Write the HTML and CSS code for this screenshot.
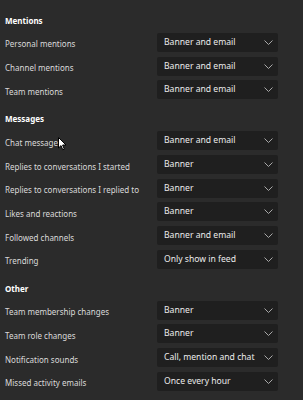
FILE: index.html
```html
<!DOCTYPE html>
<html lang="en">
<head>
    <meta charset="UTF-8">
    <meta name="viewport" content="width=device-width, initial-scale=1.0">
    <title>Notifications</title>
    <link rel="stylesheet" href="styles.css">
</head>
<body>
    <div class="settings">
        <div class="section">
            <h3>Mentions</h3>
            <div class="row"><span class="label">Personal mentions</span><div class="select">Banner and email<svg class="chev" width="9" height="5" viewBox="0 0 9 5"><polyline points="0.5,0.5 4.5,4.5 8.5,0.5"/></svg></div></div>
            <div class="row"><span class="label">Channel mentions</span><div class="select">Banner and email<svg class="chev" width="9" height="5" viewBox="0 0 9 5"><polyline points="0.5,0.5 4.5,4.5 8.5,0.5"/></svg></div></div>
            <div class="row"><span class="label">Team mentions</span><div class="select">Banner and email<svg class="chev" width="9" height="5" viewBox="0 0 9 5"><polyline points="0.5,0.5 4.5,4.5 8.5,0.5"/></svg></div></div>
        </div>

        <div class="section">
            <h3>Messages</h3>
            <div class="row"><span class="label cursor-host">Chat messages<svg class="cursor" width="9" height="14" viewBox="0 0 9 14"><path d="M0.5 0.5 L0.5 11 L3 8.6 L4.8 12.8 L6.3 12.1 L4.6 8 L8 8 Z"/></svg></span><div class="select">Banner and email<svg class="chev" width="9" height="5" viewBox="0 0 9 5"><polyline points="0.5,0.5 4.5,4.5 8.5,0.5"/></svg></div></div>
            <div class="row"><span class="label">Replies to conversations I started</span><div class="select">Banner<svg class="chev" width="9" height="5" viewBox="0 0 9 5"><polyline points="0.5,0.5 4.5,4.5 8.5,0.5"/></svg></div></div>
            <div class="row"><span class="label">Replies to conversations I replied to</span><div class="select">Banner<svg class="chev" width="9" height="5" viewBox="0 0 9 5"><polyline points="0.5,0.5 4.5,4.5 8.5,0.5"/></svg></div></div>
            <div class="row"><span class="label">Likes and reactions</span><div class="select">Banner<svg class="chev" width="9" height="5" viewBox="0 0 9 5"><polyline points="0.5,0.5 4.5,4.5 8.5,0.5"/></svg></div></div>
            <div class="row"><span class="label">Followed channels</span><div class="select">Banner and email<svg class="chev" width="9" height="5" viewBox="0 0 9 5"><polyline points="0.5,0.5 4.5,4.5 8.5,0.5"/></svg></div></div>
            <div class="row"><span class="label">Trending</span><div class="select">Only show in feed<svg class="chev" width="9" height="5" viewBox="0 0 9 5"><polyline points="0.5,0.5 4.5,4.5 8.5,0.5"/></svg></div></div>
        </div>

        <div class="section">
            <h3>Other</h3>
            <div class="row"><span class="label">Team membership changes</span><div class="select">Banner<svg class="chev" width="9" height="5" viewBox="0 0 9 5"><polyline points="0.5,0.5 4.5,4.5 8.5,0.5"/></svg></div></div>
            <div class="row"><span class="label">Team role changes</span><div class="select">Banner<svg class="chev" width="9" height="5" viewBox="0 0 9 5"><polyline points="0.5,0.5 4.5,4.5 8.5,0.5"/></svg></div></div>
            <div class="row"><span class="label">Notification sounds</span><div class="select">Call, mention and chat<svg class="chev" width="9" height="5" viewBox="0 0 9 5"><polyline points="0.5,0.5 4.5,4.5 8.5,0.5"/></svg></div></div>
            <div class="row"><span class="label">Missed activity emails</span><div class="select">Once every hour<svg class="chev" width="9" height="5" viewBox="0 0 9 5"><polyline points="0.5,0.5 4.5,4.5 8.5,0.5"/></svg></div></div>
        </div>
    </div>
</body>
</html>
```

FILE: styles.css
```css
* { margin: 0; padding: 0; box-sizing: border-box; }
html, body { background: #2b2b2b; }
body { font-family: "Noto Sans", "Open Sans", sans-serif; color: #dadada; font-size: 8px; width: 303px; height: 400px; overflow: hidden; }
.settings { padding: 14px 25px 0 5px; display: flex; flex-direction: column; gap: 13px; }
.section { display: flex; flex-direction: column; gap: 4.7px; }
.section h3 { font-size: 8px; font-weight: bold; color: #fff; line-height: 14px; height: 14px; margin-bottom: 0.3px; }
.row { display: flex; align-items: center; height: 19px; }
.label { width: 152px; flex: none; white-space: nowrap; padding-top: 3px; }
.select { width: 121px; flex: none; height: 19px; background: #1f1f1f; border-radius: 2px; display: flex; align-items: center; justify-content: space-between; padding: 0 5px 1px 7px; color: #ececec; font-size: 8.6px; white-space: nowrap; }
.chev { margin-top: 1px; }
.chev polyline { fill: none; stroke: #a8a8a8; stroke-width: 1; }
.cursor-host { position: relative; }
.cursor { position: absolute; left: 53px; top: 3px; }
.cursor path { fill: #fff; stroke: #000; stroke-width: 1; stroke-linejoin: round; }
```
